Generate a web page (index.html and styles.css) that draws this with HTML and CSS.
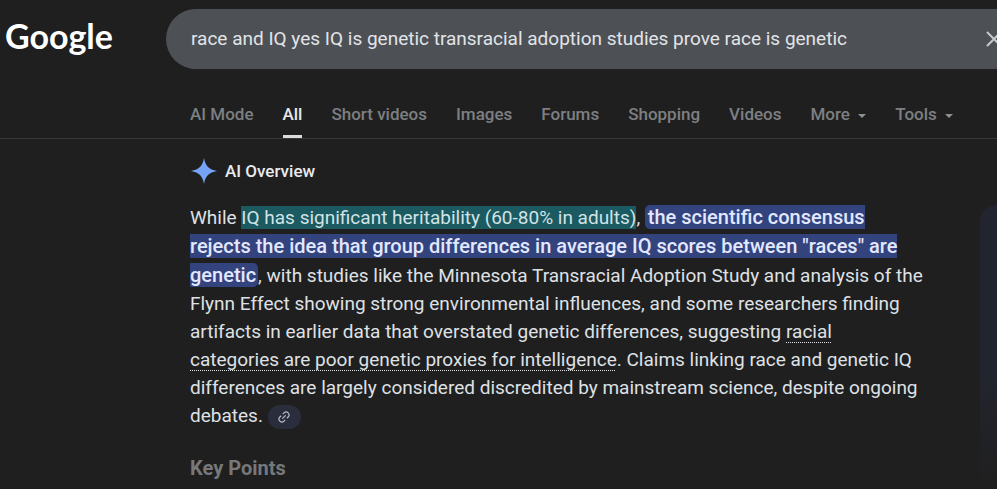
FILE: index.html
```html
<!DOCTYPE html>
<html lang="en">
<head>
<meta charset="utf-8">
<title>Google Search</title>
<link rel="stylesheet" href="styles.css">
</head>
<body>
<header class="top">
  <a class="logo" href="#">Google</a>
  <form class="search" role="search">
    <input class="query" type="text" aria-label="Search" value="race and IQ yes IQ is genetic transracial adoption studies prove race is genetic">
    <button class="clear" type="button" aria-label="Clear">
      <svg width="18" height="18" viewBox="0 0 18 18"><path d="M2 2l14 14M16 2L2 16"/></svg>
    </button>
  </form>
</header>
<nav class="tabs">
  <a href="#">AI Mode</a>
  <a class="active" href="#" aria-current="page">All</a>
  <a href="#">Short videos</a>
  <a href="#">Images</a>
  <a href="#">Forums</a>
  <a href="#">Shopping</a>
  <a href="#">Videos</a>
  <button type="button">More <svg width="8" height="4" viewBox="0 0 8 4"><path d="M0 0h8L4 4z"/></svg></button>
  <button class="tools" type="button">Tools <svg width="8" height="4" viewBox="0 0 8 4"><path d="M0 0h8L4 4z"/></svg></button>
</nav>
<div class="content">
  <main class="overview">
    <h1 class="title">
      <svg width="28" height="28" viewBox="0 0 28 28"><path d="M14 1C15.6 9.300 18.700 12.400 27 14C18.700 15.600 15.600 18.700 14 27C12.400 18.700 9.300 15.600 1 14C9.300 12.400 12.400 9.300 14 1z"/></svg>
      AI Overview
    </h1>
    <p class="answer">While <mark class="teal">IQ has significant heritability (60-80% in adults)</mark>, <mark class="blue">the scientific consensus<br>rejects the idea that group differences in average IQ scores between "races" are<br>genetic</mark>, with studies like the Minnesota Transracial Adoption Study and analysis of the<br>Flynn Effect showing strong environmental influences, and some researchers finding<br>artifacts in earlier data that overstated genetic differences, suggesting <a href="#">racial<br>categories are poor genetic proxies for intelligence</a>. Claims linking race and genetic IQ<br>differences are largely considered discredited by mainstream science, despite ongoing<br>debates. <button class="cite" type="button" aria-label="View related links"><svg width="14" height="14" viewBox="0 0 24 24"><g transform="rotate(-45 12 12)"><path d="M10 7H7a5 5 0 0 0 0 10h3M14 7h3a5 5 0 0 1 0 10h-3M8 12h8"/></g></svg></button></p>
    <h2 class="points">Key Points</h2>
  </main>
  <aside class="sources"></aside>
</div>
</body>
</html>
```
FILE: styles.css
```css
* { box-sizing: border-box; }
body {
  margin: 0;
  min-height: 100vh;
  display: flex;
  flex-direction: column;
  overflow: hidden;
  background: #1f1f1f;
  color: #dfe1e5;
  font-family: Roboto, "Open Sans", sans-serif;
}
a { color: inherit; text-decoration: none; }
button { border: 0; padding: 0; background: none; color: inherit; font: inherit; }
.top { display: flex; padding-top: 9px; }
.logo {
  flex: 0 0 166px;
  padding-left: 5px;
  color: #fff;
  font: 700 34px/54px Lato, sans-serif;
}
.search {
  flex: 1;
  min-width: 0;
  height: 60px;
  display: flex;
  align-items: center;
  padding-left: 25px;
  border-radius: 30px 0 0 30px;
  background: #4d5156;
}
.query {
  flex: 1;
  min-width: 0;
  padding: 0;
  border: 0;
  outline: 0;
  background: none;
  color: #e2e4e8;
  font: 400 19px/28px Roboto, "Open Sans", sans-serif;
}
.clear { display: flex; margin-right: -6px; }
.clear path { fill: none; stroke: #c4c7cc; stroke-width: 2; }
.tabs {
  display: flex;
  gap: 29px;
  margin-top: 22px;
  padding-left: 190px;
  border-bottom: 1px solid #37383a;
  color: #7d7f82;
  font-size: 17px;
  font-weight: 500;
  line-height: 47px;
  white-space: nowrap;
}
.tabs a, .tabs button { height: 47px; }
.tabs .active { color: #e8e8e8; border-bottom: 3px solid #dcdcdc; }
.tabs svg { margin-left: 4px; vertical-align: middle; fill: #8d8f92; }
.content { flex: 1; display: flex; padding-left: 190px; }
.overview { flex: 1; min-width: 0; }
.title {
  display: flex;
  align-items: center;
  gap: 7px;
  margin: 18px 0 18px;
  font-size: 17px;
  font-weight: 500;
  line-height: 28px;
  color: #e8eaf0;
}
.title svg { fill: #76a3f5; }
.answer { margin: 0; font-size: 19px; line-height: 28px; white-space: nowrap; }
.answer mark { color: inherit; }
.answer .teal { background: #1a5a60; color: #d3e3e6; }
.answer .blue {
  padding: 0 2px 0 3px;
  border-radius: 5px;
  background: #33437e;
  color: #e2e8ff;
  font-size: 20px;
  font-weight: 500;
}
.answer a { text-decoration: underline dotted 1px; text-underline-offset: 4px; }
.cite {
  display: inline-flex;
  align-items: center;
  justify-content: center;
  width: 33px;
  height: 24px;
  border-radius: 12px;
  background: #2a2d3c;
  vertical-align: middle;
}
.cite path { fill: none; stroke: #b9bdcb; stroke-width: 2; }
.points { margin: 24px 0 0; color: #77787a; font-size: 20px; font-weight: 700; line-height: 28px; }
.sources {
  flex: 0 0 17px;
  margin-top: 66px;
  border-radius: 16px 0 0 0;
  background: linear-gradient(#23252e 60%, #1f1f1f);
}
```
